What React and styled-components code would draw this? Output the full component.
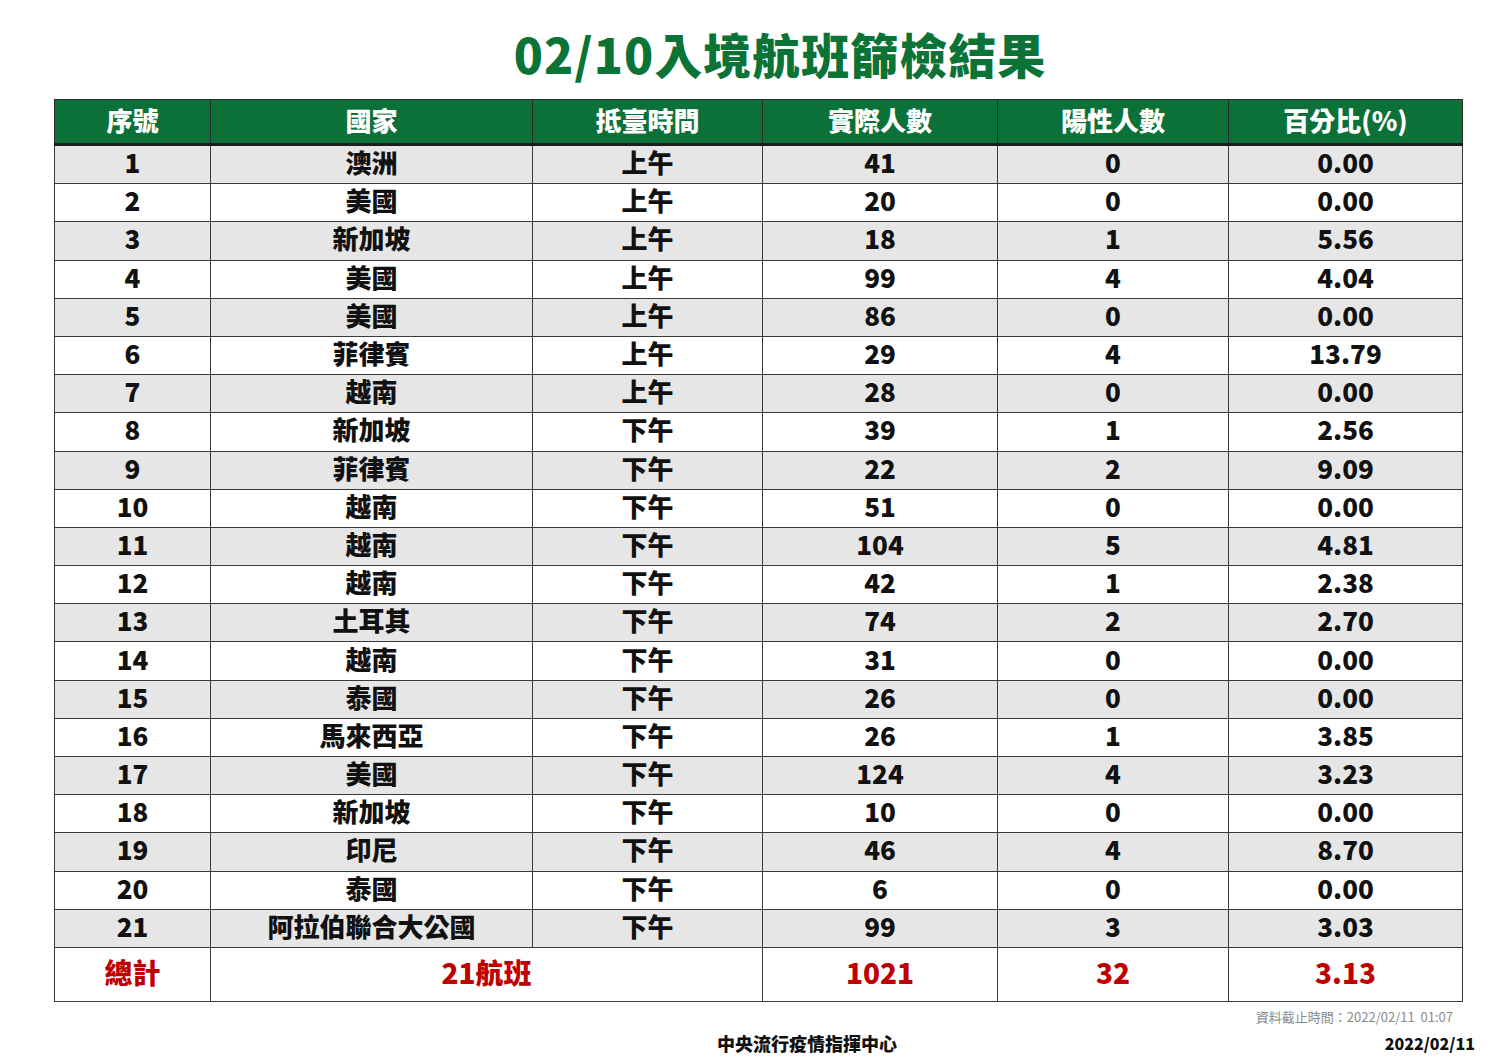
import React from 'react';
import styled, { createGlobalStyle } from 'styled-components';

const GlobalStyle = createGlobalStyle`
  html, body {
    margin: 0;
    padding: 0;
    background: #ffffff;
  }
  body {
    font-family: "Noto Sans CJK TC", "Noto Sans", sans-serif;
  }
`;

const Page = styled.div`
  width: 1500px;
  height: 1061px;
  box-sizing: border-box;
  padding: 22px 38px 0 54px;
  background: #ffffff;
`;

const Title = styled.h1`
  margin: 0;
  padding-left: 44px;
  height: 77px;
  text-align: center;
  font-size: 48px;
  line-height: 62px;
  font-weight: 900;
  color: #0c7337;
  letter-spacing: 1px;
`;

const Table = styled.table`
  width: 1408px;
  border-collapse: collapse;
  table-layout: fixed;
`;

const HeadCell = styled.th`
  height: 39px;
  padding: 0 0 4px;
  background: #0b7139;
  color: #ffffff;
  font-size: 26px;
  font-weight: 900;
  line-height: 1;
  text-align: center;
  border: 1px solid #2b2b2b;
  border-bottom: 3px solid #1d1d1d;
`;

const Row = styled.tr`
  background: ${({ $shade }) => ($shade ? '#e6e6e6' : '#ffffff')};
`;

const Cell = styled.td`
  height: 32.2px;
  padding: 0 0 5px;
  font-size: 26px;
  font-weight: 900;
  line-height: 1;
  text-align: center;
  color: #111111;
  border: 1px solid #3a3a3a;
`;

const TotalCell = styled.td`
  height: 49px;
  padding: 0 0 4px;
  font-size: 28px;
  font-weight: 900;
  line-height: 1;
  text-align: center;
  color: #c00000;
  border: 1px solid #3a3a3a;
`;

const Footer = styled.div`
  display: flex;
  flex-direction: column;
  padding-top: 6px;
`;

const Cutoff = styled.div`
  text-align: right;
  padding-right: 9px;
  font-size: 13px;
  color: #8a8a8a;
  line-height: 18px;
`;

const FooterRow = styled.div`
  display: grid;
  grid-template-columns: 1fr auto 1fr;
  align-items: center;
  margin-top: 4px;
  padding-left: 98px;
`;

const Agency = styled.div`
  grid-column: 2;
  font-size: 18px;
  font-weight: 900;
  color: #111111;
`;

const DateText = styled.div`
  grid-column: 3;
  justify-self: end;
  margin-right: -13px;
  font-size: 16px;
  font-weight: 900;
  color: #111111;
`;

const columns = [
  { label: '序號', width: 156 },
  { label: '國家', width: 322 },
  { label: '抵臺時間', width: 230 },
  { label: '實際人數', width: 235 },
  { label: '陽性人數', width: 231 },
  { label: '百分比(%)', width: 234 },
];

const flights = [
  ['澳洲', '上午', 41, 0, '0.00'],
  ['美國', '上午', 20, 0, '0.00'],
  ['新加坡', '上午', 18, 1, '5.56'],
  ['美國', '上午', 99, 4, '4.04'],
  ['美國', '上午', 86, 0, '0.00'],
  ['菲律賓', '上午', 29, 4, '13.79'],
  ['越南', '上午', 28, 0, '0.00'],
  ['新加坡', '下午', 39, 1, '2.56'],
  ['菲律賓', '下午', 22, 2, '9.09'],
  ['越南', '下午', 51, 0, '0.00'],
  ['越南', '下午', 104, 5, '4.81'],
  ['越南', '下午', 42, 1, '2.38'],
  ['土耳其', '下午', 74, 2, '2.70'],
  ['越南', '下午', 31, 0, '0.00'],
  ['泰國', '下午', 26, 0, '0.00'],
  ['馬來西亞', '下午', 26, 1, '3.85'],
  ['美國', '下午', 124, 4, '3.23'],
  ['新加坡', '下午', 10, 0, '0.00'],
  ['印尼', '下午', 46, 4, '8.70'],
  ['泰國', '下午', 6, 0, '0.00'],
  ['阿拉伯聯合大公國', '下午', 99, 3, '3.03'],
];

export default function App() {
  return (
    <>
      <GlobalStyle />
      <Page>
        <Title>02/10入境航班篩檢結果</Title>
        <Table>
          <colgroup>
            {columns.map((c) => (
              <col key={c.label} style={{ width: c.width }} />
            ))}
          </colgroup>
          <thead>
            <tr>
              {columns.map((c) => (
                <HeadCell key={c.label}>{c.label}</HeadCell>
              ))}
            </tr>
          </thead>
          <tbody>
            {flights.map((f, i) => (
              <Row key={i} $shade={i % 2 === 0}>
                <Cell>{i + 1}</Cell>
                <Cell>{f[0]}</Cell>
                <Cell>{f[1]}</Cell>
                <Cell>{f[2]}</Cell>
                <Cell>{f[3]}</Cell>
                <Cell>{f[4]}</Cell>
              </Row>
            ))}
            <Row>
              <TotalCell>總計</TotalCell>
              <TotalCell colSpan={2}>21航班</TotalCell>
              <TotalCell>1021</TotalCell>
              <TotalCell>32</TotalCell>
              <TotalCell>3.13</TotalCell>
            </Row>
          </tbody>
        </Table>
        <Footer>
          <Cutoff>資料截止時間：2022/02/11&nbsp;&nbsp;01:07</Cutoff>
          <FooterRow>
            <Agency>中央流行疫情指揮中心</Agency>
            <DateText>2022/02/11</DateText>
          </FooterRow>
        </Footer>
      </Page>
    </>
  );
}
